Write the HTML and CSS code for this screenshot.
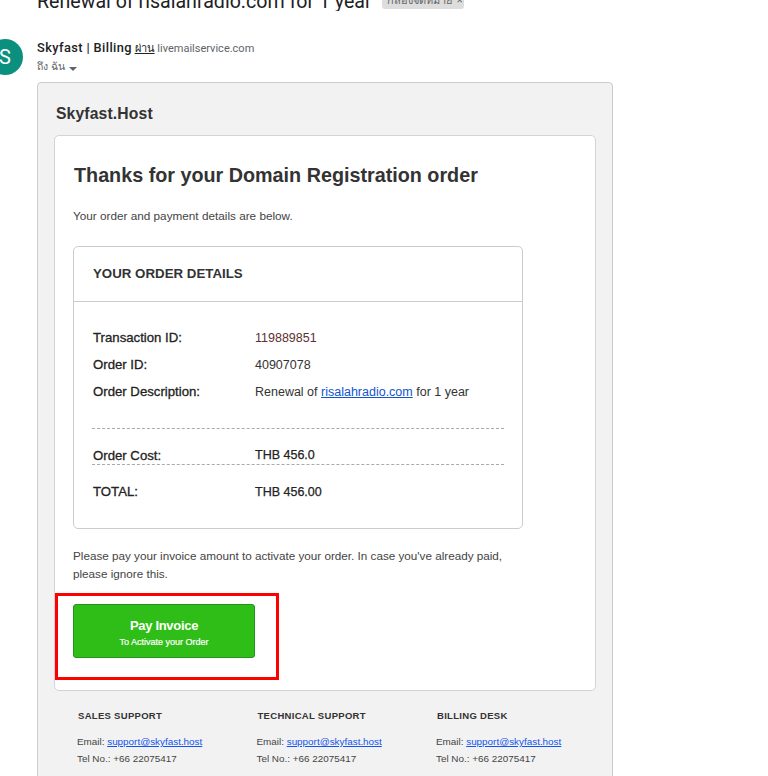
FILE: index.html
```html
<!DOCTYPE html>
<html lang="en">
<head>
<meta charset="utf-8">
<title>Renewal of risalahradio.com for 1 year</title>
<link rel="stylesheet" href="styles.css">
</head>
<body>
<div class="page">
  <div class="subject-row">
    <h1 class="subject">Renewal of risalahradio.com for 1 year</h1>
    <span class="label">กล่องจดหมาย <span class="label-x">×</span></span>
  </div>
  <div class="sender-row">
    <div class="avatar">S</div>
    <div class="sender">
      <div class="sender-line"><strong class="sender-name">Skyfast | Billing</strong> <u class="via">ผ่าน</u> <span class="domain">livemailservice.com</span></div>
      <div class="to-line">ถึง ฉัน <span class="caret"></span></div>
    </div>
  </div>
  <div class="mail">
    <div class="brand">Skyfast.Host</div>
    <div class="panel">
      <h2 class="thanks">Thanks for your Domain Registration order</h2>
      <p class="intro">Your order and payment details are below.</p>
      <div class="details">
        <div class="details-head">YOUR ORDER DETAILS</div>
        <div class="details-body">
          <div class="row"><span class="key">Transaction ID:</span><span class="val red">119889851</span></div>
          <div class="row"><span class="key">Order ID:</span><span class="val">40907078</span></div>
          <div class="row"><span class="key">Order Description:</span><span class="val">Renewal of <a href="#">risalahradio.com</a> for 1 year</span></div>
          <div class="row cost"><span class="key">Order Cost:</span><span class="val">THB 456.0</span></div>
          <div class="row total"><span class="key">TOTAL:</span><span class="val">THB 456.00</span></div>
        </div>
      </div>
      <p class="note">Please pay your invoice amount to activate your order. In case you've already paid,<br>please ignore this.</p>
      <div class="highlight">
        <a class="pay" href="#"><span class="pay-main">Pay Invoice</span><span class="pay-sub">To Activate your Order</span></a>
      </div>
    </div>
    <div class="support">
      <div class="col">
        <h3>SALES SUPPORT</h3>
        <p>Email: <a href="#">support@skyfast.host</a></p>
        <p>Tel No.: +66 22075417</p>
      </div>
      <div class="col">
        <h3>TECHNICAL SUPPORT</h3>
        <p>Email: <a href="#">support@skyfast.host</a></p>
        <p>Tel No.: +66 22075417</p>
      </div>
      <div class="col">
        <h3>BILLING DESK</h3>
        <p>Email: <a href="#">support@skyfast.host</a></p>
        <p>Tel No.: +66 22075417</p>
      </div>
    </div>
  </div>
</div>
</body>
</html>
```
FILE: styles.css
```css
* { box-sizing: border-box; }
html, body { margin: 0; padding: 0; background: #fff; }
body { font-family: "Liberation Sans", Arial, sans-serif; color: #333; }
.page { width: 768px; height: 776px; overflow: hidden; padding-left: 37px; }
.subject-row { height: 11px; display: flex; align-items: flex-end; overflow: hidden; gap: 10px; }
.subject { margin: 0 0 -3px; font: 400 19.6px/24px Roboto, sans-serif; color: #202124; white-space: nowrap; flex: none; }
.label { flex: none; width: 82px; height: 16px; margin-bottom: 2px; padding: 0 5px; background: #ddd; border-radius: 3px; font: 11px/14px "Noto Sans", "Liberation Sans", sans-serif; color: #666; white-space: nowrap; }
.label-x { margin-left: 2px; }
.sender-row { display: flex; height: 71px; padding-top: 28px; position: relative; }
.avatar { position: absolute; left: -50px; top: 28px; width: 36px; height: 36px; border-radius: 50%; background: #0b8f7e; color: #fff; font: 20px/36px Roboto, sans-serif; text-align: center; }
.sender-line { font: 11px/18px Roboto, sans-serif; color: #5f6368; white-space: nowrap; }
.sender-name { font-weight: 500; color: #202124; letter-spacing: .4px; font-size: 12.8px; }
.via { color: #202124; font-family: "Noto Sans", sans-serif; font-size: 11px; }
.to-line { font: 10.5px/16px "Noto Sans", Roboto, sans-serif; color: #5f6368; }
.caret { display: inline-block; width: 0; height: 0; margin-left: 2px; border: 4px solid transparent; border-top-color: #5f6368; border-bottom: 0; vertical-align: -1px; }
.mail { width: 576px; height: 780px; background: #f2f2f2; border: 1px solid #ccc; border-radius: 4px; padding: 0 16px; }
.brand { font-size: 15.7px; font-weight: 700; line-height: 20px; padding-left: 2px; margin-top: 21px; height: 31px; letter-spacing: .15px; color: #333; }
.panel { width: 542px; height: 556px; background: #fff; border: 1px solid #d4d4d4; border-radius: 5px; padding: 0 18px; }
.thanks { margin: 25px 0 0 1px; font-size: 19.75px; line-height: 28px; font-weight: 700; color: #333; white-space: nowrap; }
.intro { margin: 19px 0 0; font-size: 11.75px; line-height: 16px; color: #444; }
.details { width: 450px; height: 283px; margin-top: 22px; border: 1px solid #ccc; border-radius: 5px; }
.details-head { height: 55px; padding-left: 19px; font-size: 13.3px; font-weight: 700; line-height: 53px; border-bottom: 1px solid #ccc; color: #333; }
.details-body { padding: 22px 18px 0 18px; }
.row { display: flex; font-size: 12.5px; line-height: 28px; height: 27px; padding-left: 1px; }
.key { width: 162px; flex: none; font-size: 13.2px; line-height: 27px; color: #222; -webkit-text-stroke: .3px #222; }
.val { color: #333; }
.red { color: #5c3030; }
.val a { color: #1155cc; }
.row.cost { margin-top: 23px; height: 37px; line-height: 26px; border-top: 1px dashed #aaa; border-bottom: 1px dashed #aaa; padding-top: 13px; }
.cost .val, .total .val { -webkit-text-stroke: .25px #222; color: #222; }
.total { margin-top: 13px; }
.note { margin: 18px 0 0; font-size: 11.7px; line-height: 18px; color: #444; }
.highlight { width: 224px; height: 87px; margin: 10px 0 0 -18px; border: 3px solid #f00; padding: 8px 0 0 15px; }
.pay { display: flex; flex-direction: column; align-items: center; width: 182px; height: 54px; background: #2fbd17; border: 1px solid #25941a; border-radius: 3px; color: #fff; text-decoration: none; padding-top: 12px; }
.pay-main { font-size: 13px; line-height: 17px; font-weight: 700; letter-spacing: -.3px; }
.pay-sub { font-size: 9px; line-height: 17px; -webkit-text-stroke: .2px #fff; }
.support { display: flex; padding: 18px 0 0 23px; }
.col { width: 179.5px; flex: none; }
.col h3 { margin: 0 0 11px 1px; font-size: 9.5px; line-height: 13px; font-weight: 700; letter-spacing: .3px; color: #333; }
.col p { margin: 0; font-size: 9.9px; line-height: 17px; color: #444; white-space: nowrap; }
.col a { color: #1155ee; }
```
